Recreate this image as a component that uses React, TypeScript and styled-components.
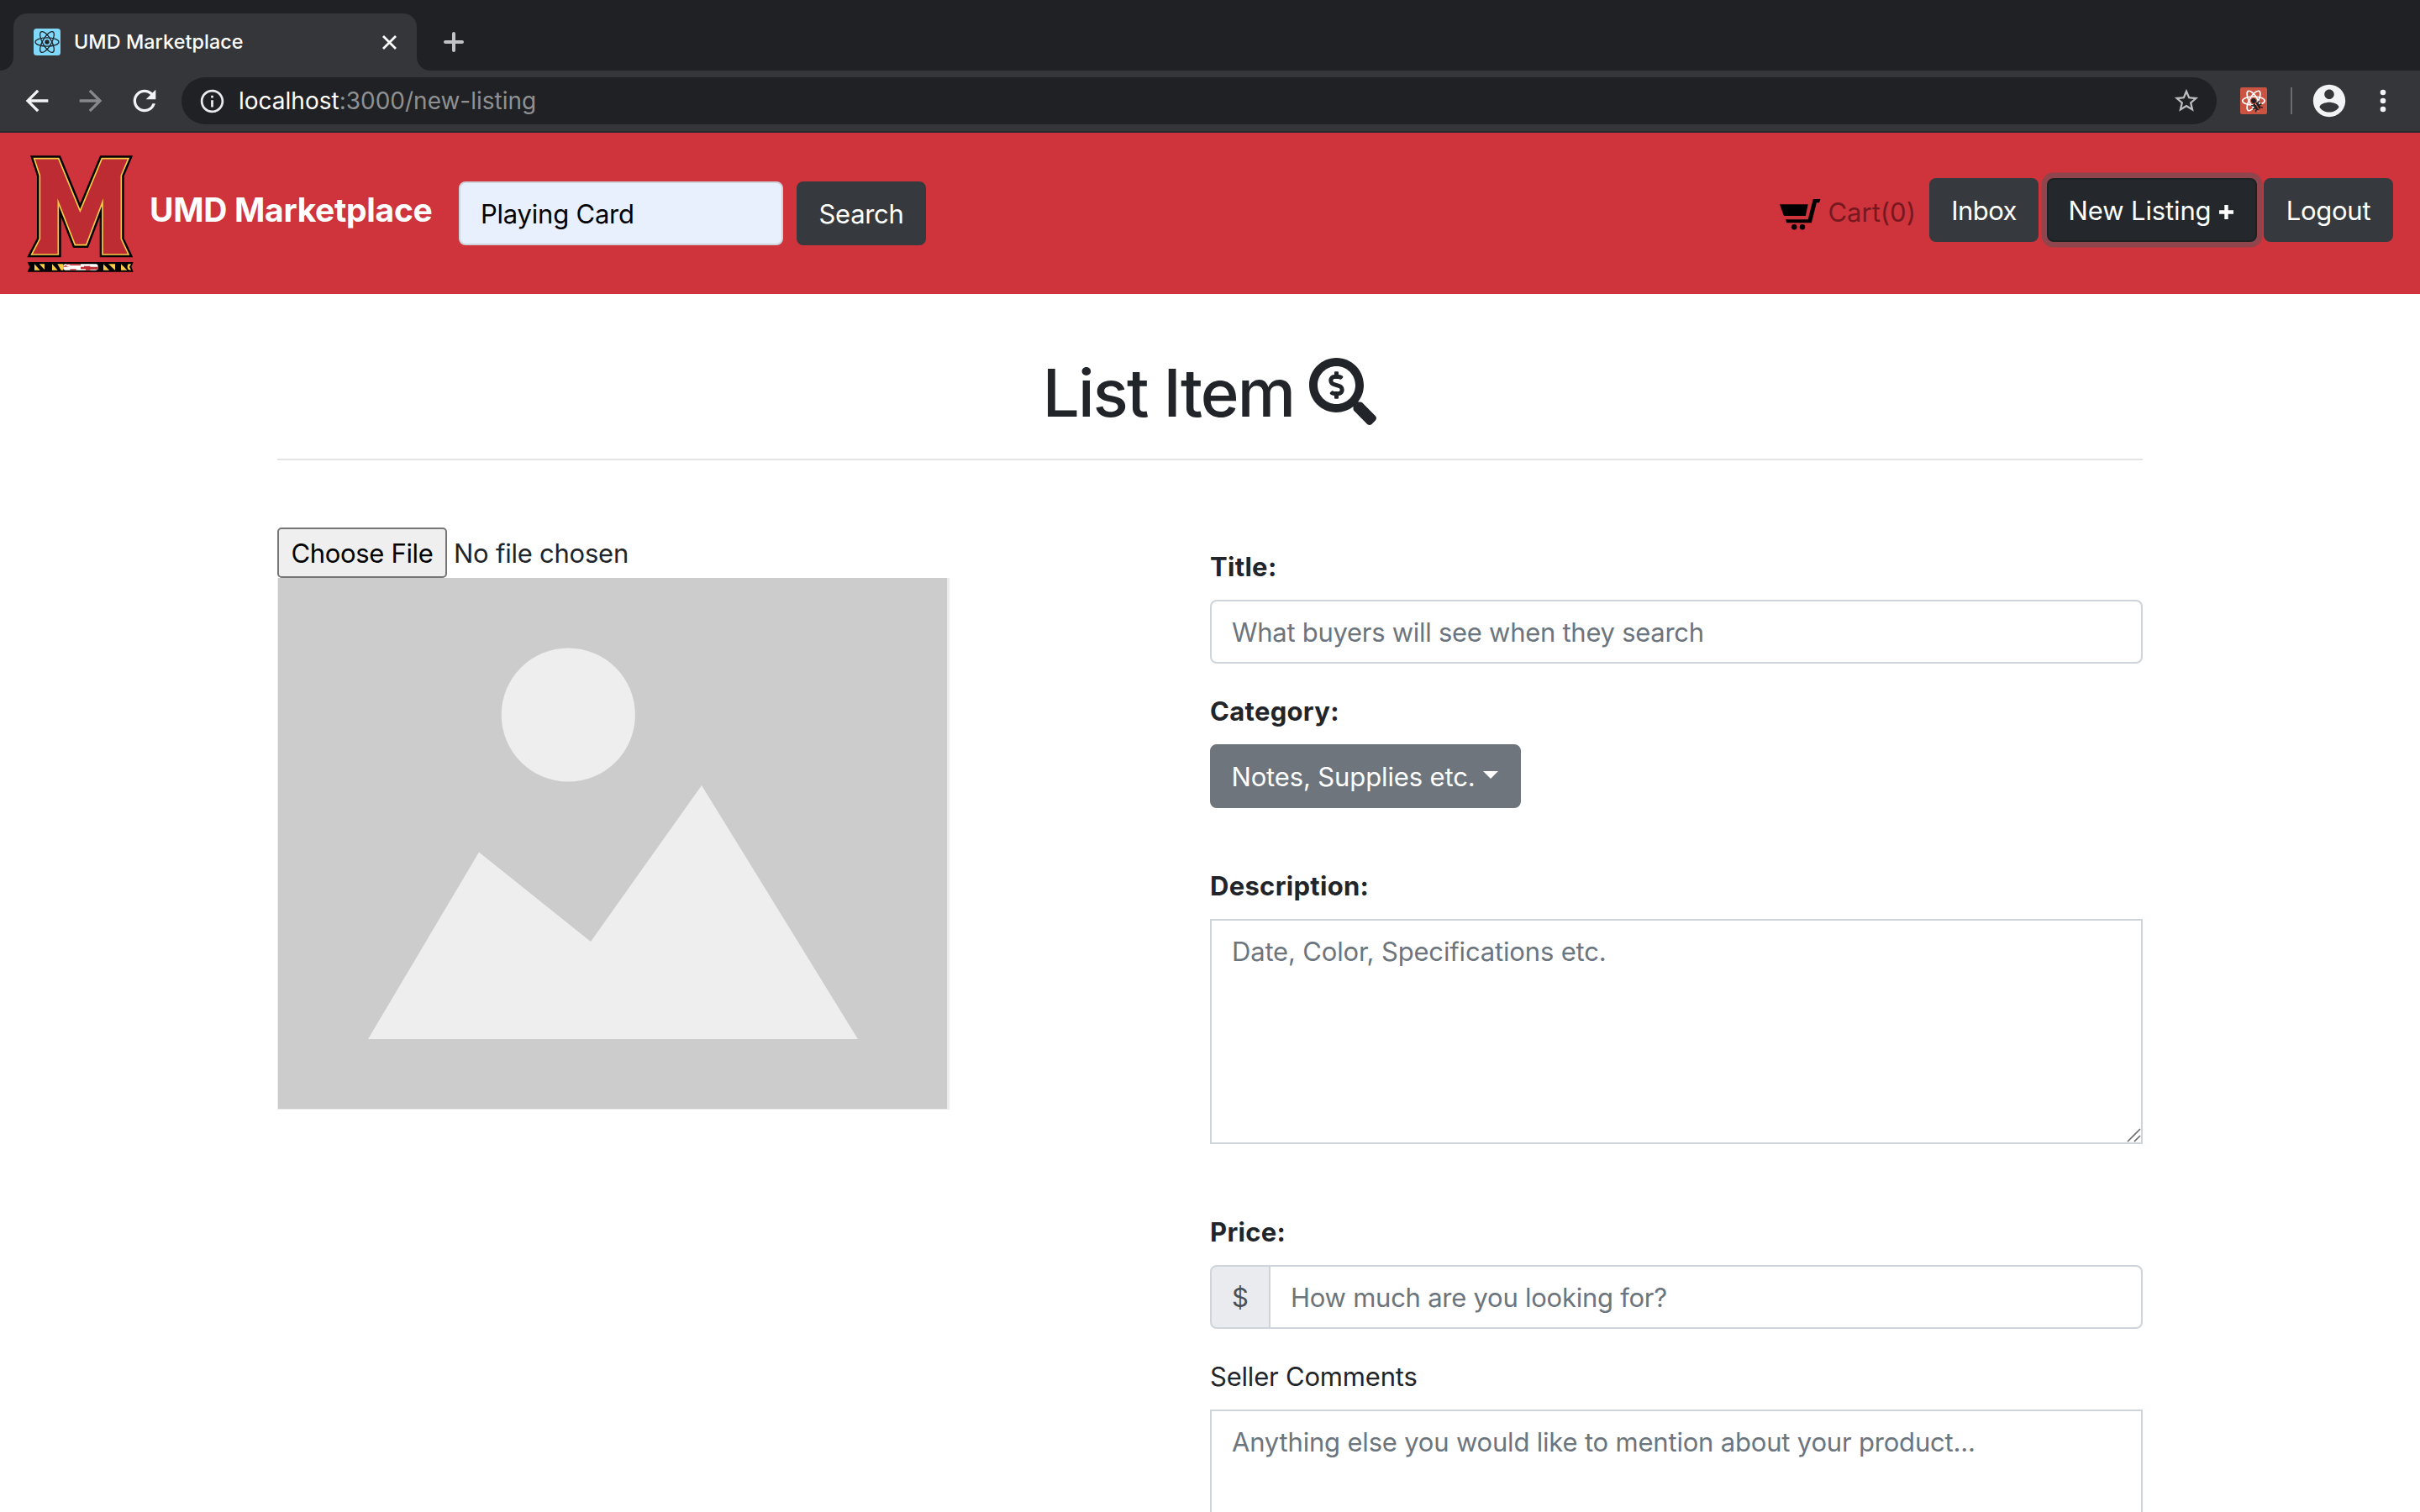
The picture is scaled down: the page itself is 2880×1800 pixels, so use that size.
import React from "react";
import styled, { createGlobalStyle } from "styled-components";
import { MdArrowBack, MdArrowForward, MdInfoOutline, MdRefresh, MdStarBorder } from "react-icons/md";
import { FaSearchDollar } from "react-icons/fa";

const GlobalStyle = createGlobalStyle`
  *, *::before, *::after { box-sizing: border-box; }
  body {
    margin: 0;
    background: #fff;
    color: #212529;
    font-family: "Inter", "Liberation Sans", sans-serif;
    font-size: 31px;
    line-height: 48px;
  }
  svg { display: block; flex: none; }
`;

const Window = styled.div`
  width: 2880px;
  height: 1800px;
  overflow: hidden;
  display: flex;
  flex-direction: column;
`;

/* ---------- browser chrome ---------- */

const TabStrip = styled.div`
  flex: none;
  height: 84px;
  padding: 16px 0 0 16px;
  display: flex;
  background: #202124;
`;

const Tab = styled.div`
  position: relative;
  width: 480px;
  height: 68px;
  padding: 0 24px 0 24px;
  display: flex;
  align-items: center;
  background: #35363a;
  border-radius: 16px 16px 0 0;

  &::before,
  &::after {
    content: "";
    position: absolute;
    bottom: 0;
    width: 16px;
    height: 16px;
  }
  &::before {
    left: -16px;
    background: radial-gradient(circle at 0 0, transparent 15.5px, #35363a 16.5px);
  }
  &::after {
    right: -16px;
    background: radial-gradient(circle at 100% 0, transparent 15.5px, #35363a 16.5px);
  }
`;

const TabTitle = styled.span`
  flex: 1;
  margin-left: 16px;
  color: #fff;
  font-size: 23.3px;
  font-weight: 500;
  letter-spacing: 0.1px;
  line-height: 32px;
`;

const NewTab = styled.div`
  margin: 22px 0 0 32px;
`;

const Toolbar = styled.div`
  flex: none;
  height: 74px;
  padding: 8px 40px 8px 24px;
  border-bottom: 2px solid #28292c;
  display: flex;
  align-items: center;
  background: #35363a;
`;

const NavIcon = styled.span<{ $dim?: boolean }>`
  flex: none;
  width: 40px;
  margin-right: 24px;
  color: ${(p) => (p.$dim ? "#87888a" : "#f1f3f4")};
`;

const Omnibox = styled.div`
  flex: none;
  width: 2422px;
  height: 56px;
  padding: 0 19px 0 20px;
  border-radius: 28px;
  display: flex;
  align-items: center;
  background: #202124;
  color: #e8eaed;
`;

const Url = styled.span`
  flex: 1;
  margin-left: 15px;
  color: #8f9092;
  font-size: 28px;
  letter-spacing: 0;
  line-height: 40px;

  b {
    font-weight: 400;
    color: #fff;
  }
`;

const OmniStar = styled.span`
  color: #bdbdbf;
`;

const Extension = styled.div`
  margin-left: 28px;
`;

const Divider = styled.div`
  flex: none;
  width: 2px;
  height: 32px;
  margin: 0 21px 0 28px;
  background: #6b6c6f;
`;

const Dots = styled.div`
  margin-left: 37px;
`;

/* ---------- site header ---------- */

const Navbar = styled.nav`
  flex: none;
  height: 192px;
  padding: 0 32px;
  display: flex;
  align-items: center;
  background: #cf333c;
`;

const Brand = styled.span`
  width: 368px;
  margin: 0 0 8px 18px;
  color: #fff;
  font-size: 39px;
  font-weight: 700;
  letter-spacing: -0.3px;
  line-height: 60px;
  white-space: nowrap;
`;

const Field = styled.input<{ $ls?: number }>`
  display: block;
  width: 100%;
  height: 76px;
  padding: 0 24px;
  border: 2px solid #ced4da;
  border-radius: 8px;
  outline: none;
  background: #fff;
  color: #000;
  font: inherit;
  letter-spacing: ${(p) => p.$ls ?? 0}px;

  &::placeholder { color: #6c757d; opacity: 1; }
`;

const SearchField = styled(Field)`
  width: 386px;
  margin-right: 16px;
  background: #e8f0fe;
`;

const Button = styled.button<{ $width: number; $ls?: number; $tone?: "secondary" | "focus" }>`
  width: ${(p) => p.$width}px;
  height: 76px;
  padding: 2px ${(p) => (p.$tone ? 2 : 0)}px 0 0;
  display: flex;
  align-items: center;
  justify-content: center;
  border: 2px solid
    ${(p) => (p.$tone === "focus" ? "#1d2124" : p.$tone === "secondary" ? "#6e757c" : "#363a3e")};
  border-radius: 8px;
  background: ${(p) => (p.$tone === "focus" ? "#24272b" : p.$tone === "secondary" ? "#6e757c" : "#363a3e")};
  box-shadow: ${(p) => (p.$tone === "focus" ? "0 0 0 6.4px rgba(82, 88, 93, 0.5)" : "none")};
  color: #fff;
  font: inherit;
  letter-spacing: ${(p) => p.$ls ?? 0}px;
  white-space: nowrap;
`;

const NavActions = styled.div`
  margin: 0 0 8px auto;
  display: flex;
  align-items: center;
`;

const Cart = styled.a`
  margin: 6px 16px 0 0;
  display: flex;
  align-items: center;
  gap: 7px;
  color: #77181f;

  svg { margin-top: 5px; fill: #000; }
`;

const ActionGap = styled.span<{ $size: number }>`
  width: ${(p) => p.$size}px;
`;

const PlusMark = styled.span`
  margin: 3px 0 0 10px;
`;

/* ---------- page ---------- */

const Page = styled.main`
  flex: none;
  width: 2220px;
  margin: 0 auto;
  padding-top: 68px;
`;

const Heading = styled.h1`
  height: 96px;
  margin: 0 0 32px;
  padding-right: 1px;
  display: flex;
  align-items: center;
  justify-content: center;
  gap: 18px;
  font-size: 78px;
  font-weight: 500;
  letter-spacing: -1.9px;
  line-height: 96px;

  span { padding-top: 3px; }
`;

const Rule = styled.hr`
  height: 2px;
  margin: 0;
  border: 0;
  background: #e5e5e5;
`;

const Columns = styled.div`
  display: grid;
  grid-template-columns: 1110px 1110px;
`;

const Upload = styled.section`
  padding-top: 80px;
`;

const FilePicker = styled.div`
  display: flex;
  align-items: center;
  height: 60px;
  gap: 8px;
  letter-spacing: -0.24px;
`;

const FileButton = styled.button`
  width: 202px;
  height: 60px;
  padding: 2px 0 0;
  border: 2px solid #767676;
  border-radius: 5px;
  background: #efefef;
  color: #000;
  font: inherit;
  letter-spacing: -0.34px;
  white-space: nowrap;
`;

const FileName = styled.span`
  padding-top: 2px;
`;

const Form = styled.form`
  padding-top: 102px;
  display: flex;
  flex-direction: column;
`;

const Group = styled.div<{ $after: number }>`
  margin-bottom: ${(p) => p.$after}px;
`;

const Label = styled.label<{ $plain?: boolean }>`
  display: block;
  padding-top: 1px;
  margin-bottom: 15px;
  font-weight: ${(p) => (p.$plain ? 400 : 700)};
  letter-spacing: ${(p) => (p.$plain ? -0.2 : 0.3)}px;
`;

const Caret = styled.span`
  margin: -5px 0 0 9px;
  border-top: 9.6px solid #fff;
  border-left: 9.6px solid transparent;
  border-right: 9.6px solid transparent;
`;

const AreaWrap = styled.div`
  position: relative;

  svg {
    position: absolute;
    right: 2px;
    bottom: 2px;
  }
`;

const Area = styled.textarea<{ $ls: number }>`
  display: block;
  width: 100%;
  height: 268px;
  padding: 13px 24px 11px;
  border: 2px solid #ced4da;
  border-radius: 0;
  outline: none;
  resize: none;
  background: #fff;
  font: inherit;
  letter-spacing: ${(p) => p.$ls}px;

  &::placeholder { color: #6c757d; opacity: 1; }
`;

const InputGroup = styled.div`
  display: flex;

  ${Field} { border-radius: 0 8px 8px 0; }
`;

const Prepend = styled.span`
  flex: none;
  width: 72px;
  height: 76px;
  margin-right: -2px;
  padding-top: 2px;
  display: flex;
  align-items: center;
  justify-content: center;
  border: 2px solid #ced4da;
  border-radius: 8px 0 0 8px;
  background: #e9ebef;
  color: #495057;
`;

const ReactFavicon = () => (
  <svg width="32" height="32" viewBox="0 0 32 32">
    <rect width="32" height="32" rx="3.5" fill="#80d8fb" />
    <g fill="none" stroke="#20232a" strokeWidth="1.3">
      <ellipse cx="16" cy="16" rx="14" ry="5.2" />
      <ellipse cx="16" cy="16" rx="14" ry="5.2" transform="rotate(60 16 16)" />
      <ellipse cx="16" cy="16" rx="14" ry="5.2" transform="rotate(120 16 16)" />
    </g>
    <circle cx="16" cy="16" r="2.7" fill="#20232a" />
  </svg>
);

const DevtoolsIcon = () => (
  <svg width="32" height="32" viewBox="0 0 32 32">
    <rect width="32" height="32" rx="2" fill="#cb5342" />
    <g fill="none" stroke="#fff" strokeWidth="1.7">
      <ellipse cx="16" cy="16" rx="13.2" ry="5" />
      <ellipse cx="16" cy="16" rx="13.2" ry="5" transform="rotate(60 16 16)" />
      <ellipse cx="16" cy="16" rx="13.2" ry="5" transform="rotate(120 16 16)" />
    </g>
    <path d="M17 20.5L29 20L28 29L16.5 28Z" fill="#cb5342" />
    <g transform="rotate(-32 16 16)" fill="#202020">
      <circle cx="16" cy="16" r="2.9" />
      <path d="M12.6 19.5h2.8v9.2q-2.8-1-2.8-4zM16.600 19.5h2.800v5.200q0 3-2.800 4z" />
      <path
        d="M12.8 21l-2.300-1.600M12.600 24h-2.800M13 26.800l-2 1.700M19.200 21l2.300-1.600M19.400 24h2.800M19 26.800l2 1.700"
        stroke="#202020"
        strokeWidth="1.5"
      />
    </g>
  </svg>
);

const AccountIcon = () => (
  <svg width="46" height="46" viewBox="0 0 24 24" fill="#f1f3f4">
    <path d="M12 2C6.48 2 2 6.48 2 12s4.48 10 10 10 10-4.48 10-10S17.520 2 12 2zm0 3c1.660 0 3 1.340 3 3s-1.340 3-3 3-3-1.340-3-3 1.340-3 3-3zm0 14c-2.500 0-4.710-1.180-6-3.020.030-1.990 4-3.080 6-3.080 1.990 0 5.970 1.090 6 3.080-1.290 1.840-3.500 3.020-6 3.020z" />
  </svg>
);

const LETTER_M = "M62 56H149L226 243L304 56H399L373 117V343L399 399H306V212L248 365H208L148 212V399H53L82 343V117Z";

const MarylandLogo = () => (
  <svg width="128" height="140" viewBox="36 42 384 420">
    <path d={LETTER_M} fill="#be2c33" stroke="#000" strokeWidth="20" strokeMiterlimit="8" />
    <path d={LETTER_M} fill="#be2c33" stroke="#f9cb47" strokeWidth="5" strokeMiterlimit="8" />
    <path d="M38 426H416L409 443L416 461H38L46 443Z" fill="#000" />
    <g fill="#f9cb47">
      <path d="M63 433L83 455H63Z" />
      <path d="M80 433H99V453Z" />
      <path d="M126 433L146 455H126Z" />
      <path d="M145 433H166V455H158Z" />
      <path d="M309 433L330 455H309Z" />
      <path d="M327 433H351V455Z" />
      <path d="M372 433L394 455H372Z" />
      <path d="M408 433H398Q391 443 398 453L408 455L402 443Z" />
    </g>
    <rect x="166" y="433" width="124" height="22" rx="8" fill="#fff" />
    <path
      d="M176 433H228V438H190V436H176ZM228 443H240V440H262V443H290V452H262V455H246V451H228ZM166 443Q170 437 178 437L176 441L190 443ZM190 455V451H212V455Z"
      fill="#be2c33"
    />
  </svg>
);

const CartIcon = () => (
  <svg width="50" height="38" viewBox="0 0 50 38">
    <path d="M0 6.300H33.700L30.800 20H5ZM39.800 0H48.500L47 4.300H43.900L37.800 28.300H8.200L7.100 24.300H33.700Z" />
    <circle cx="17.300" cy="33.300" r="3.200" />
    <circle cx="27" cy="33.300" r="3.200" />
  </svg>
);

const ImagePlaceholder = () => (
  <svg width="800" height="633" viewBox="0 0 800 633">
    <rect width="800" height="633" fill="#ececec" />
    <rect x="1" width="796" height="632" fill="#cccccc" />
    <circle cx="346.300" cy="163" r="79.600" fill="#eeeeee" />
    <path d="M108 549L240 326.500L373 433L505 247L691 549Z" fill="#eeeeee" />
  </svg>
);

const ResizeHandle = () => (
  <svg width="18" height="18" viewBox="0 0 18 18" stroke="#6b6b6b" strokeWidth="1.600">
    <path d="M2 17L17 2M10 17L17 10" />
  </svg>
);

export default function App() {
  return (
    <Window>
      <GlobalStyle />
      <TabStrip>
        <Tab>
          <ReactFavicon />
          <TabTitle>UMD Marketplace</TabTitle>
          <svg width="17" height="17" viewBox="0 0 17 17" stroke="#fff" strokeWidth="2.800">
            <path d="M1 1L16 16M16 1L1 16" />
          </svg>
        </Tab>
        <NewTab>
          <svg width="24" height="24" viewBox="0 0 24 24" stroke="#c0c2c5" strokeWidth="4" strokeLinecap="round">
            <path d="M12 2V22M2 12H22" />
          </svg>
        </NewTab>
      </TabStrip>

      <Toolbar>
        <NavIcon><MdArrowBack size={40} /></NavIcon>
        <NavIcon $dim><MdArrowForward size={40} /></NavIcon>
        <NavIcon><MdRefresh size={40} /></NavIcon>
        <Omnibox>
          <MdInfoOutline size={33} />
          <Url><b>localhost</b>:3000/new-listing</Url>
          <OmniStar><MdStarBorder size={34} /></OmniStar>
        </Omnibox>
        <Extension><DevtoolsIcon /></Extension>
        <Divider />
        <AccountIcon />
        <Dots>
          <svg width="8" height="28" viewBox="0 0 8 28" fill="#f1f3f4">
            <circle cx="4" cy="4" r="3.300" />
            <circle cx="4" cy="14" r="3.300" />
            <circle cx="4" cy="24" r="3.300" />
          </svg>
        </Dots>
      </Toolbar>

      <Navbar>
        <MarylandLogo />
        <Brand>UMD Marketplace</Brand>
        <SearchField defaultValue="Playing Card" $ls={-0.22} />
        <Button $width={154} $ls={-0.31}>Search</Button>
        <NavActions>
          <Cart><CartIcon />Cart(0)</Cart>
          <Button $width={130} $ls={-0.55}>Inbox</Button>
          <ActionGap $size={10} />
          <Button $width={250} $ls={-0.13} $tone="focus">
            New Listing
            <PlusMark>
              <svg width="17" height="17" viewBox="0 0 17 17" stroke="#fff" strokeWidth="4.400">
                <path d="M8.500 0V17M0 8.500H17" />
              </svg>
            </PlusMark>
          </Button>
          <ActionGap $size={8} />
          <Button $width={154} $ls={-0.26}>Logout</Button>
        </NavActions>
      </Navbar>

      <Page>
        <Heading>
          <span>List Item</span>
          <FaSearchDollar size={80} />
        </Heading>
        <Rule />
        <Columns>
          <Upload>
            <FilePicker>
              <FileButton>Choose File</FileButton>
              <FileName>No file chosen</FileName>
            </FilePicker>
            <ImagePlaceholder />
          </Upload>
          <Form>
            <Group $after={32}>
              <Label>Title:</Label>
              <Field placeholder="What buyers will see when they search" $ls={-0.28} />
            </Group>
            <Group $after={68}>
              <Label>Category:</Label>
              <Button type="button" $width={370} $ls={-0.13} $tone="secondary">
                Notes, Supplies etc.
                <Caret />
              </Button>
            </Group>
            <Group $after={80}>
              <Label>Description:</Label>
              <AreaWrap>
                <Area placeholder="Date, Color, Specifications etc." $ls={-0.165} />
                <ResizeHandle />
              </AreaWrap>
            </Group>
            <Group $after={32}>
              <Label>Price:</Label>
              <InputGroup>
                <Prepend>$</Prepend>
                <Field placeholder="How much are you looking for?" $ls={-0.25} />
              </InputGroup>
            </Group>
            <Group $after={0}>
              <Label $plain>Seller Comments</Label>
              <Area placeholder="Anything else you would like to mention about your product..." $ls={-0.19} />
            </Group>
          </Form>
        </Columns>
      </Page>
    </Window>
  );
}
